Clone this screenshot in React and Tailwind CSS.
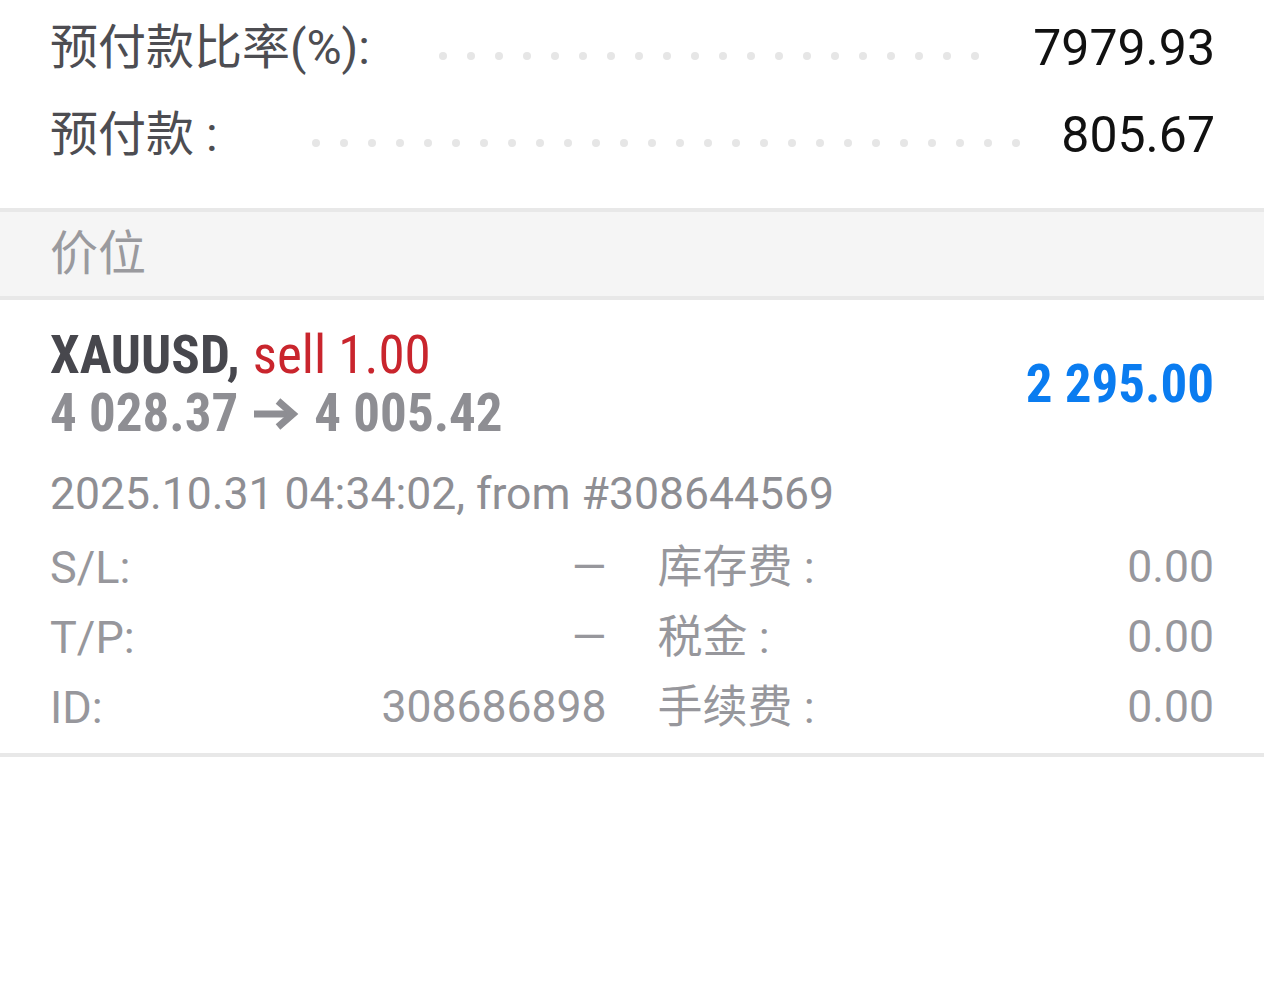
import React from "react"

const font = "font-['Roboto','Noto_Sans_CJK_SC',sans-serif]"

function Dots({ count }) {
  return (
    <div className="flex-1 flex justify-end gap-[20px] overflow-hidden mt-[16px]">
      {Array.from({ length: count }).map((_, i) => (
        <span key={i} className="w-[8px] h-[8px] rounded-full bg-[#e6e6e6] shrink-0" />
      ))}
    </div>
  )
}

function SummaryRow({ label, value, dots, gap }) {
  return (
    <div className="flex items-center h-[87px]">
      <span className="text-[48px] text-[#4d4d52] leading-none">{label}</span>
      <Dots count={dots} />
      <span className={"text-[50px] text-[#111] leading-none " + gap}>{value}</span>
    </div>
  )
}

function Detail({ label, value }) {
  return (
    <div className="flex items-center justify-between h-[70px] text-[#97979c]">
      <span className="text-[45px] leading-none">{label}</span>
      <span className="text-[44.5px] leading-none">{value}</span>
    </div>
  )
}

function Arrow() {
  return (
    <svg width="46" height="34" viewBox="0 0 46 34" className="mx-[15px] mt-[2px]">
      <path d="M1 17H40" stroke="#8e8e93" strokeWidth="7" />
      <path d="M25 4L40 17L25 30" fill="none" stroke="#8e8e93" strokeWidth="7" />
    </svg>
  )
}

export default function App() {
  return (
    <div className={"w-[1264px] h-[992px] bg-white " + font}>
      <div className="pl-[50px] pt-[4px] pr-[49px]">
        <SummaryRow label="预付款比率(%):" value="7979.93" dots={20} gap="ml-[54px]" />
        <SummaryRow label="预付款 :" value="805.67" dots={26} gap="ml-[41px]" />
      </div>

      <div className="mt-[30px] border-y-4 border-[#e8e8e8] bg-[#f5f5f5] h-[92px] flex items-center px-[50px]">
        <span className="text-[48px] text-[#9a9a9e] leading-none">价位</span>
      </div>

      <div className="pl-[50px] pr-[50px] pt-[26px] pb-[11px] border-b-4 border-[#e8e8e8]">
        <div className="flex items-center justify-between">
          <div className="flex flex-col">
            <div className="h-[58px] flex items-center text-[53px] leading-none [font-stretch:75%]">
              <span className="font-bold text-[#47474d]">XAUUSD,</span>
              <span className="ml-[13px] text-[#c9252d]">sell 1.00</span>
            </div>
            <div className="h-[58px] flex items-center text-[53px] leading-none font-bold text-[#8e8e93] [font-stretch:75%]">
              <span>4 028.37</span>
              <Arrow />
              <span>4 005.42</span>
            </div>
          </div>
          <span className="text-[53px] leading-none font-bold text-[#0a7cf0] [font-stretch:75%]">2 295.00</span>
        </div>

        <div className="mt-[17px] h-[70px] flex items-center text-[44.5px] leading-none text-[#8e8e93]">
          2025.10.31 04:34:02, from #308644569
        </div>

        <div className="mt-[3px] grid grid-cols-2 gap-x-[51px]">
          <Detail label="S/L:" value="—" />
          <Detail label="库存费 :" value="0.00" />
          <Detail label="T/P:" value="—" />
          <Detail label="税金 :" value="0.00" />
          <Detail label="ID:" value="308686898" />
          <Detail label="手续费 :" value="0.00" />
        </div>
      </div>
    </div>
  )
}
